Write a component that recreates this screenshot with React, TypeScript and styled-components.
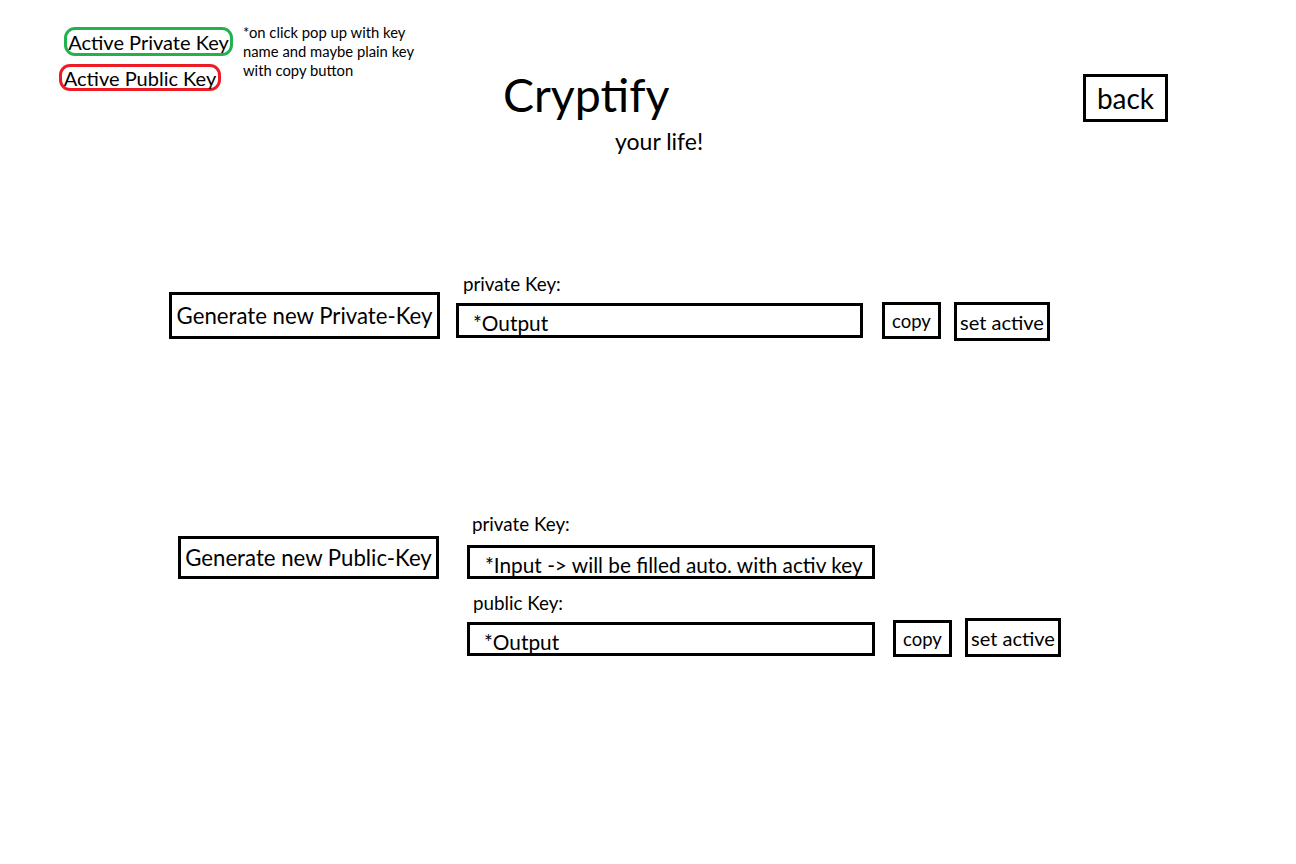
import React from "react";
import styled, { createGlobalStyle } from "styled-components";

const Global = createGlobalStyle`
  html, body { margin: 0; padding: 0; background: #ffffff; }
  body { font-family: Lato, "Open Sans", sans-serif; color: #000; }
  * { box-sizing: border-box; }
`;

const Page = styled.div`
  width: 1296px;
  height: 864px;
  display: flex;
  flex-direction: column;
  overflow: hidden;
  background: #fff;
`;

const Header = styled.header`
  height: 160px;
  display: flex;
  align-items: flex-start;
  padding: 27px 128px 0 59px;
`;

const Legend = styled.div`
  width: 174px;
  display: flex;
  flex-direction: column;
  align-items: flex-start;
  gap: 8px;
`;

const KeyPill = styled.button<{ $color: string; $w: number; $h: number; $ml: number }>`
  width: ${(p) => p.$w}px;
  height: ${(p) => p.$h}px;
  margin-left: ${(p) => p.$ml}px;
  border: 3px solid ${(p) => p.$color};
  border-radius: 11px;
  background: #fff;
  padding: 0;
  font-family: Lato, sans-serif;
  font-size: 20px;
  color: #000;
  display: flex;
  align-items: center;
  justify-content: center;
  white-space: nowrap;
`;

const Note = styled.p`
  width: 185px;
  margin: -4px 0 0 10px;
  font-size: 14.8px;
  line-height: 19px;
`;

const TitleBlock = styled.div`
  margin: 44px 0 0 77px;
  display: flex;
  flex-direction: column;
`;

const Title = styled.h1`
  margin: 0;
  margin-left: -2px;
  font-size: 46.5px;
  font-weight: 400;
  line-height: 1;
`;

const Slogan = styled.span`
  margin: 12px 0 0 110px;
  font-size: 23px;
  line-height: 1;
`;

const BoxButton = styled.button<{ $w: number; $h: number; $fs: number; $mt?: number; $ml?: number }>`
  width: ${(p) => p.$w}px;
  height: ${(p) => p.$h}px;
  margin-top: ${(p) => p.$mt ?? 0}px;
  margin-left: ${(p) => p.$ml ?? 0}px;
  flex: none;
  border: 3px solid #000;
  border-radius: 0;
  background: #fff;
  padding: 0;
  font-family: Lato, sans-serif;
  font-size: ${(p) => p.$fs}px;
  color: #000;
  display: flex;
  align-items: center;
  justify-content: center;
  white-space: nowrap;
`;

const BackButton = styled(BoxButton)`
  margin-left: auto;
`;

const KeyRow = styled.section<{ $mt: number; $pl: number }>`
  margin-top: ${(p) => p.$mt}px;
  padding-left: ${(p) => p.$pl}px;
  display: flex;
  align-items: flex-start;
`;

const Fields = styled.div<{ $ml: number }>`
  margin-left: ${(p) => p.$ml}px;
  display: flex;
  flex-direction: column;
`;

const FieldLabel = styled.label<{ $indent: number; $mt?: number }>`
  display: block;
  margin-top: ${(p) => p.$mt ?? 0}px;
  padding-left: ${(p) => p.$indent}px;
  font-size: 18.8px;
  line-height: 24px;
`;

const FieldLine = styled.div<{ $mt: number }>`
  margin-top: ${(p) => p.$mt}px;
  display: flex;
  align-items: flex-start;
`;

const OutputBox = styled.div<{ $w: number; $h: number; $mt: number; $pl: number }>`
  width: ${(p) => p.$w}px;
  height: ${(p) => p.$h}px;
  margin-top: ${(p) => p.$mt}px;
  flex: none;
  border: 3px solid #000;
  padding-left: ${(p) => p.$pl}px;
  font-size: 20.8px;
  line-height: 34px;
  overflow: hidden;
  white-space: nowrap;
`;

export default function App() {
  return (
    <>
      <Global />
      <Page>
        <Header>
          <Legend>
            <KeyPill $color="#22b14c" $w={169} $h={29} $ml={5}>
              Active Private Key
            </KeyPill>
            <KeyPill $color="#ed1c24" $w={162} $h={27} $ml={0}>
              Active Public Key
            </KeyPill>
          </Legend>
          <Note>
            *on click pop up with key name and maybe plain key with copy button
          </Note>
          <TitleBlock>
            <Title>Cryptify</Title>
            <Slogan>your life!</Slogan>
          </TitleBlock>
          <BackButton $w={85} $h={48} $fs={28} $mt={47}>
            back
          </BackButton>
        </Header>

        <KeyRow $mt={112} $pl={169}>
          <BoxButton $w={271} $h={47} $fs={22.2} $mt={20}>
            Generate new Private-Key
          </BoxButton>
          <Fields $ml={16}>
            <FieldLabel $indent={7}>private Key:</FieldLabel>
            <FieldLine $mt={6}>
              <OutputBox $w={407} $h={35} $mt={1} $pl={14}>
                *Output
              </OutputBox>
              <BoxButton $w={59} $h={37} $fs={18.5} $ml={19}>
                copy
              </BoxButton>
              <BoxButton $w={96} $h={39} $fs={20} $ml={13}>
                set active
              </BoxButton>
            </FieldLine>
          </Fields>
        </KeyRow>

        <KeyRow $mt={171} $pl={178}>
          <BoxButton $w={261} $h={43} $fs={22.2} $mt={24}>
            Generate new Public-Key
          </BoxButton>
          <Fields $ml={28}>
            <FieldLabel $indent={5}>private Key:</FieldLabel>
            <OutputBox $w={408} $h={34} $mt={9} $pl={15}>
              *Input -&gt; will be filled auto. with activ key
            </OutputBox>
            <FieldLabel $indent={6} $mt={12}>
              public Key:
            </FieldLabel>
            <FieldLine $mt={3}>
              <OutputBox $w={408} $h={34} $mt={4} $pl={14}>
                *Output
              </OutputBox>
              <BoxButton $w={59} $h={37} $fs={18.5} $ml={18} $mt={2}>
                copy
              </BoxButton>
              <BoxButton $w={96} $h={39} $fs={20} $ml={13}>
                set active
              </BoxButton>
            </FieldLine>
          </Fields>
        </KeyRow>
      </Page>
    </>
  );
}
